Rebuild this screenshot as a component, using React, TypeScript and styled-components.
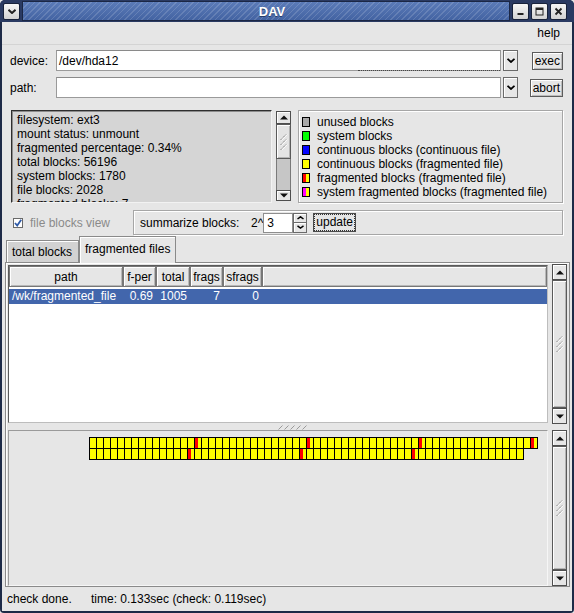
import React from "react";
import styled, { createGlobalStyle } from "styled-components";

const GlobalStyle = createGlobalStyle`
  * { box-sizing: border-box; }
  html, body { margin: 0; padding: 0; }
  body {
    width: 574px;
    height: 613px;
    overflow: hidden;
    background: #e6e6e6;
    font-family: "Liberation Sans", Arial, Helvetica, sans-serif;
    font-size: 12px;
    color: #000;
  }
`;

const Window = styled.div`
  width: 574px;
  height: 613px;
  display: flex;
  flex-direction: column;
  background: #1d2a47;
  border-radius: 5px 5px 4px 4px;
  overflow: hidden;
`;

const TitleBar = styled.div`
  height: 22px;
  flex: none;
  display: flex;
  align-items: center;
  padding: 0 7px 0 3px;
  background: #2a3a62;
`;

const TitleButton = styled.div<{ $gapLeft?: number }>`
  width: 17px;
  height: 17px;
  flex: none;
  margin-left: ${(p) => p.$gapLeft ?? 0}px;
  border: 1px solid #18223a;
  border-radius: 2px;
  background: linear-gradient(#f6f6f6, #d2d2d2);
  display: flex;
  align-items: center;
  justify-content: center;
`;

const TitleCaption = styled.div`
  flex: 1;
  align-self: stretch;
  margin: 1px 2px;
  padding-left: 12px;
  display: flex;
  align-items: center;
  justify-content: center;
  color: #fff;
  font-weight: bold;
  font-size: 13px;
  text-shadow: 0 1px 0 #253a66;
  border: 1px solid #1b2745;
  background:
    repeating-linear-gradient(135deg, rgba(255, 255, 255, 0.14) 0 1px, transparent 1px 4px),
    linear-gradient(#5b7bb8, #4363a2);
`;

const WindowBody = styled.div`
  flex: 1;
  min-height: 0;
  display: flex;
  padding: 0 2px 2px 2px;
`;

const Client = styled.div`
  flex: 1;
  min-width: 0;
  display: flex;
  flex-direction: column;
  background: #e6e6e6;
`;

const MenuBar = styled.div`
  height: 23px;
  flex: none;
  display: flex;
  justify-content: flex-end;
  align-items: center;
  padding-right: 11px;
  border-bottom: 1px solid #d4d4d4;
`;

const MenuItem = styled.span`
  padding: 0 1px;
`;

const FormGrid = styled.div`
  flex: none;
  display: grid;
  grid-template-columns: 46px 462px 46px;
  grid-auto-rows: 21px;
  row-gap: 6px;
  padding: 5px 8px 0 8px;
  align-items: center;
`;

const FieldLabel = styled.span`
  white-space: nowrap;
`;

const Combo = styled.div`
  height: 21px;
  display: flex;
  gap: 2px;
`;

const ComboEntry = styled.div<{ $focusLine?: boolean }>`
  flex: 1;
  position: relative;
  display: flex;
  align-items: center;
  padding-left: 2px;
  background: #fff;
  border: 1px solid #9a9a9a;
  border-top-color: #8a8a8a;
  &::after {
    content: "";
    display: ${(p) => (p.$focusLine ? "block" : "none")};
    position: absolute;
    left: 301px;
    right: 0;
    bottom: -1px;
    border-bottom: 1px dotted #444;
  }
`;

const ComboArrow = styled.div`
  width: 15px;
  flex: none;
  display: flex;
  align-items: center;
  justify-content: center;
  background: #e6e6e6;
  border: 1px solid #6a6a6a;
  box-shadow: inset 1px 1px 0 #fff;
`;

const PushButton = styled.button`
  justify-self: end;
  margin-right: 1px;
  height: 18px;
  padding: 0 2px;
  font: inherit;
  color: #000;
  background: #e6e6e6;
  border: 1px solid #5c5c5c;
  box-shadow: inset 1px 1px 0 #fff, inset -1px -1px 0 #bcbcbc;
  border-radius: 0;
  line-height: 14px;
`;

const InfoRow = styled.div`
  flex: none;
  height: 93px;
  margin-top: 12px;
  padding: 0 9px;
  display: flex;
`;

const InfoBox = styled.div`
  width: 261px;
  flex: none;
  overflow: hidden;
  white-space: nowrap;
  line-height: 14px;
  padding: 2px 0 0 5px;
  background: #d5d5d5;
  border: 1px solid;
  border-color: #2e2e2e #f2f2f2 #f2f2f2 #2e2e2e;
  box-shadow: inset 1px 1px 0 #8c8c8c;
`;

const InfoLine = styled.div``;

const VScroll = styled.div<{ $margin?: string }>`
  width: 15px;
  flex: none;
  margin: ${(p) => p.$margin ?? "0"};
  display: flex;
  flex-direction: column;
  background: #c6c6c6;
  border: 1px solid #7a7a7a;
`;

const ScrollBtn = styled.div<{ $h: number }>`
  height: ${(p) => p.$h}px;
  flex: none;
  display: flex;
  align-items: center;
  justify-content: center;
  background: #e6e6e6;
  border: 1px solid #4e4e4e;
  margin: -1px;
  box-shadow: inset 1px 1px 0 #fff;
`;

const Trough = styled.div`
  flex: 1;
  min-height: 0;
  display: flex;
  flex-direction: column;
  padding: 1px 0;
`;

const Thumb = styled.div<{ $h?: number }>`
  ${(p) => (p.$h ? `height: ${p.$h}px; flex: none;` : "flex: 1;")}
  margin: 0 -1px;
  display: flex;
  align-items: center;
  justify-content: center;
  background: #e4e4e4;
  border: 1px solid #5a5a5a;
  box-shadow: inset 1px 1px 0 #fff, inset -1px -1px 0 #b4b4b4;
`;

const Legend = styled.div`
  flex: 1;
  margin-left: 7px;
  padding: 4px 0 0 3px;
  border: 1px solid #a6a6a6;
  box-shadow: inset 1px 1px 0 #fff, 1px 1px 0 #fff;
`;

const LegendRow = styled.div`
  height: 14px;
  display: flex;
  align-items: center;
  white-space: nowrap;
`;

const Swatch = styled.span<{ $fill: string }>`
  width: 8px;
  height: 10px;
  flex: none;
  margin-right: 7px;
  border: 1px solid #000;
  background: ${(p) => p.$fill};
`;

const OptionsRow = styled.div`
  flex: none;
  height: 25px;
  margin-top: 7px;
  padding: 0 9px 0 11px;
  display: flex;
`;

const CheckArea = styled.label`
  width: 120px;
  flex: none;
  display: flex;
  align-items: center;
  gap: 7px;
  color: #8a8a8a;
`;

const CheckBox = styled.span`
  width: 10px;
  height: 10px;
  flex: none;
  display: flex;
  align-items: center;
  justify-content: center;
  background: #fff;
  border: 1px solid #6a6a6a;
`;

const SummFrame = styled.div`
  flex: 1;
  display: flex;
  align-items: center;
  padding-left: 6px;
  border: 1px solid #a6a6a6;
  box-shadow: inset 1px 1px 0 #fff, 1px 1px 0 #fff;
`;

const SummLabel = styled.span`
  width: 111px;
  flex: none;
`;

const SpinEntry = styled.div`
  width: 30px;
  height: 20px;
  flex: none;
  display: flex;
  align-items: center;
  padding-left: 3px;
  background: #fff;
  border: 1px solid #8e8e8e;
`;

const SpinButtons = styled.div`
  width: 14px;
  height: 20px;
  flex: none;
  display: flex;
  flex-direction: column;
`;

const SpinHalf = styled.div`
  flex: 1;
  display: flex;
  align-items: center;
  justify-content: center;
  background: #e6e6e6;
  border: 1px solid #6a6a6a;
  box-shadow: inset 1px 1px 0 #fff;
  & + & {
    border-top: none;
  }
`;

const UpdateButton = styled.button`
  height: 19px;
  margin-left: 6px;
  padding: 0 2px;
  font: inherit;
  color: #000;
  background: #e6e6e6;
  border: 1px solid #4a4a4a;
  border-radius: 0;
  outline: 1px dotted #333;
  outline-offset: -2px;
  line-height: 15px;
`;

const TabRow = styled.div`
  flex: none;
  height: 26px;
  margin-top: 1px;
  padding-left: 4px;
  display: flex;
  align-items: flex-end;
  position: relative;
  z-index: 1;
`;

const Tab = styled.div<{ $active?: boolean; $w: number }>`
  width: ${(p) => p.$w}px;
  height: ${(p) => (p.$active ? 27 : 22)}px;
  margin-bottom: ${(p) => (p.$active ? -1 : 0)}px;
  padding: ${(p) => (p.$active ? "0 0 2px 5px" : "0 0 0 5px")};
  display: flex;
  align-items: center;
  white-space: nowrap;
  background: ${(p) => (p.$active ? "#e6e6e6" : "#d2d2d2")};
  border: 1px solid #8a8a8a;
  border-bottom: none;
  box-shadow: inset 1px 1px 0 #fff;
`;

const TabPanel = styled.div`
  flex: none;
  height: 325px;
  margin: 0 2px 0 3px;
  padding: 1px 2px 0 2px;
  display: flex;
  flex-direction: column;
  border: 1px solid #8a8a8a;
  box-shadow: inset 1px 1px 0 #fff;
`;

const Pane = styled.div<{ $h: number }>`
  height: ${(p) => p.$h}px;
  flex: none;
  display: flex;
  gap: 4px;
`;

const TableFrame = styled.div`
  flex: 1;
  min-width: 0;
  margin: 1px 0 1px 0;
  display: flex;
  flex-direction: column;
  background: #fff;
  border: 1px solid;
  border-color: #5a5a5a #bdbdbd #bdbdbd #5a5a5a;
`;

const HeaderRow = styled.div`
  height: 21px;
  flex: none;
  display: flex;
`;

const HeaderCell = styled.div<{ $w?: number }>`
  ${(p) => (p.$w ? `width: ${p.$w}px; flex: none;` : "flex: 1;")}
  display: flex;
  align-items: center;
  justify-content: center;
  background: #e6e6e6;
  border: 1px solid #777;
  box-shadow: inset 1px 1px 0 #fff, inset -1px -1px 0 #b8b8b8;
`;

const DataRow = styled.div<{ $selected?: boolean }>`
  height: 15px;
  margin-top: 2px;
  display: flex;
  line-height: 15px;
  white-space: nowrap;
  background: ${(p) => (p.$selected ? "#4266ac" : "transparent")};
  color: ${(p) => (p.$selected ? "#fff" : "#000")};
`;

const DataCell = styled.div<{ $w: number; $right?: boolean }>`
  width: ${(p) => p.$w}px;
  flex: none;
  padding: 0 3px;
  text-align: ${(p) => (p.$right ? "right" : "left")};
`;

const PaneHandle = styled.div`
  height: 6px;
  flex: none;
  display: flex;
  align-items: center;
  justify-content: center;
  padding-left: 10px;
`;

const CanvasFrame = styled.div`
  flex: 1;
  min-width: 0;
  padding: 6px 0 0 80px;
  background: #e6e6e6;
  border: 1px solid;
  border-color: #9a9a9a #f6f6f6 #f6f6f6 #9a9a9a;
`;

const StatusBar = styled.div`
  flex: 1;
  display: flex;
  align-items: center;
  padding-left: 5px;
  white-space: nowrap;
`;

const StatusCell = styled.span<{ $w?: number }>`
  ${(p) => (p.$w ? `width: ${p.$w}px; flex: none;` : "")}
`;

/* ---------- drawings ---------- */

const Chevron = ({ up = false, color = "#000", w = 7, h = 4, sw = 1.8 }) => (
  <svg width={w + 1} height={h + 1} viewBox={`0 0 ${w + 1} ${h + 1}`}>
    <path
      d={up ? `M0.5 ${h} L${(w + 1) / 2} 0.8 L${w + 0.5} ${h}` : `M0.5 0.8 L${(w + 1) / 2} ${h} L${w + 0.5} 0.8`}
      fill="none"
      stroke={color}
      strokeWidth={sw}
    />
  </svg>
);

const Tri = ({ up = false }) => (
  <svg width="8" height="5" viewBox="0 0 8 5">
    <path d={up ? "M0 4.5 L4 0.5 L8 4.5 Z" : "M0 0.5 L8 0.5 L4 4.5 Z"} fill="#111" />
  </svg>
);

const Grip = () => (
  <svg width="8" height="16" viewBox="0 0 8 16">
    {[0, 5, 10].map((o) => (
      <g key={o}>
        <line x1="0.5" y1={6 + o} x2="6.5" y2={o} stroke="#8a8a8a" strokeWidth="1" strokeDasharray="1.5 0.6" />
        <line x1="1.5" y1={6.5 + o} x2="7.5" y2={0.5 + o} stroke="#fff" strokeWidth="0.8" />
      </g>
    ))}
  </svg>
);

const PaneGrip = () => (
  <svg width="30" height="5" viewBox="0 0 30 5">
    {[0, 1, 2, 3, 4].map((i) => (
      <line key={i} x1={i * 6 + 0.5} y1="4.5" x2={i * 6 + 4.5} y2="0.5" stroke="#9a9a9a" strokeWidth="1" />
    ))}
  </svg>
);

const CheckMark = () => (
  <svg width="8" height="8" viewBox="0 0 8 8">
    <path d="M1 4 L3.2 6.5 L7.2 0.8" fill="none" stroke="#2f5aa8" strokeWidth="1.8" />
  </svg>
);

const MinIcon = () => (
  <svg width="9" height="9" viewBox="0 0 9 9">
    <rect x="1.5" y="6" width="6" height="2" fill="#222" />
  </svg>
);

const MaxIcon = () => (
  <svg width="9" height="9" viewBox="0 0 9 9">
    <rect x="1" y="1" width="7" height="7" fill="none" stroke="#222" strokeWidth="1" />
    <rect x="1" y="1" width="7" height="2" fill="#222" />
  </svg>
);

const CloseIcon = () => (
  <svg width="9" height="9" viewBox="0 0 9 9">
    <path d="M1.5 1.5 L7.5 7.5 M7.5 1.5 L1.5 7.5" stroke="#222" strokeWidth="1.8" />
  </svg>
);

const blockRows = [
  { count: 64, reds: [15, 31, 47, 63] },
  { count: 62, reds: [14, 30, 46] },
];

const BlockMap = () => (
  <svg width={449} height={23} viewBox="0 0 449 23" shapeRendering="crispEdges">
    {blockRows.map((r, ri) =>
      Array.from({ length: r.count }, (_, i) => (
        <g key={`${ri}-${i}`}>
          <rect x={i * 7 + 0.5} y={ri * 11 + 0.5} width={7} height={11} fill="#ffff00" stroke="#000" strokeWidth="1" />
          {r.reds.includes(i) && <rect x={i * 7 + 1} y={ri * 11 + 1} width={3} height={10} fill="#ff0000" />}
        </g>
      ))
    )}
  </svg>
);

/* ---------- data ---------- */

const infoLines = [
  "filesystem: ext3",
  "mount status: unmount",
  "fragmented percentage: 0.34%",
  "total blocks: 56196",
  "system blocks: 1780",
  "file blocks: 2028",
  "fragmented blocks: 7",
];

const legendItems = [
  { fill: "#a8a8a8", label: "unused blocks" },
  { fill: "#00ff00", label: "system blocks" },
  { fill: "#0000ff", label: "continuous blocks (continuous file)" },
  { fill: "#ffff00", label: "continuous blocks (fragmented file)" },
  { fill: "linear-gradient(90deg, #ff0000 50%, #ffff00 50%)", label: "fragmented blocks (fragmented file)" },
  { fill: "linear-gradient(90deg, #ff00ff 50%, #ffff00 50%)", label: "system fragmented blocks (fragmented file)" },
];

const columns = [
  { title: "path", w: 114 },
  { title: "f-per", w: 33 },
  { title: "total", w: 34 },
  { title: "frags", w: 33 },
  { title: "sfrags", w: 39 },
];

const rowData = ["/wk/fragmented_file", "0.69", "1005", "7", "0"];

export default function App() {
  return (
    <>
      <GlobalStyle />
      <Window>
        <TitleBar>
          <TitleButton>
            <Chevron color="#222" w={7} h={4} sw={2} />
          </TitleButton>
          <TitleCaption>DAV</TitleCaption>
          <TitleButton>
            <MinIcon />
          </TitleButton>
          <TitleButton $gapLeft={2}>
            <MaxIcon />
          </TitleButton>
          <TitleButton $gapLeft={2}>
            <CloseIcon />
          </TitleButton>
        </TitleBar>
        <WindowBody>
          <Client>
            <MenuBar>
              <MenuItem>help</MenuItem>
            </MenuBar>

            <FormGrid>
              <FieldLabel>device:</FieldLabel>
              <Combo>
                <ComboEntry $focusLine>/dev/hda12</ComboEntry>
                <ComboArrow>
                  <Chevron />
                </ComboArrow>
              </Combo>
              <PushButton>exec</PushButton>

              <FieldLabel>path:</FieldLabel>
              <Combo>
                <ComboEntry />
                <ComboArrow>
                  <Chevron />
                </ComboArrow>
              </Combo>
              <PushButton>abort</PushButton>
            </FormGrid>

            <InfoRow>
              <InfoBox>
                {infoLines.map((l) => (
                  <InfoLine key={l}>{l}</InfoLine>
                ))}
              </InfoBox>
              <VScroll $margin="1px 0 2px 4px">
                <ScrollBtn $h={13}>
                  <Tri up />
                </ScrollBtn>
                <Trough>
                  <Thumb $h={35}>
                    <Grip />
                  </Thumb>
                </Trough>
                <ScrollBtn $h={11}>
                  <Tri />
                </ScrollBtn>
              </VScroll>
              <Legend>
                {legendItems.map((it) => (
                  <LegendRow key={it.label}>
                    <Swatch $fill={it.fill} />
                    {it.label}
                  </LegendRow>
                ))}
              </Legend>
            </InfoRow>

            <OptionsRow>
              <CheckArea>
                <CheckBox>
                  <CheckMark />
                </CheckBox>
                file blocks view
              </CheckArea>
              <SummFrame>
                <SummLabel>summarize blocks:</SummLabel>
                <span>2^</span>
                <SpinEntry>3</SpinEntry>
                <SpinButtons>
                  <SpinHalf>
                    <Chevron up w={6} h={3} sw={1.5} />
                  </SpinHalf>
                  <SpinHalf>
                    <Chevron w={6} h={3} sw={1.5} />
                  </SpinHalf>
                </SpinButtons>
                <UpdateButton>update</UpdateButton>
              </SummFrame>
            </OptionsRow>

            <TabRow>
              <Tab $w={73}>total blocks</Tab>
              <Tab $w={97} $active>
                fragmented files
              </Tab>
            </TabRow>

            <TabPanel>
              <Pane $h={160}>
                <TableFrame>
                  <HeaderRow>
                    {columns.map((c) => (
                      <HeaderCell key={c.title} $w={c.w}>
                        {c.title}
                      </HeaderCell>
                    ))}
                    <HeaderCell />
                  </HeaderRow>
                  <DataRow $selected>
                    {columns.map((c, i) => (
                      <DataCell key={c.title} $w={c.w} $right={i > 0}>
                        {rowData[i]}
                      </DataCell>
                    ))}
                  </DataRow>
                </TableFrame>
                <VScroll>
                  <ScrollBtn $h={16}>
                    <Tri up />
                  </ScrollBtn>
                  <Trough>
                    <Thumb>
                      <Grip />
                    </Thumb>
                  </Trough>
                  <ScrollBtn $h={16}>
                    <Tri />
                  </ScrollBtn>
                </VScroll>
              </Pane>

              <PaneHandle>
                <PaneGrip />
              </PaneHandle>

              <Pane $h={156}>
                <CanvasFrame>
                  <BlockMap />
                </CanvasFrame>
                <VScroll>
                  <ScrollBtn $h={16}>
                    <Tri up />
                  </ScrollBtn>
                  <Trough>
                    <Thumb>
                      <Grip />
                    </Thumb>
                  </Trough>
                  <ScrollBtn $h={16}>
                    <Tri />
                  </ScrollBtn>
                </VScroll>
              </Pane>
            </TabPanel>

            <StatusBar>
              <StatusCell $w={84}>check done.</StatusCell>
              <StatusCell>time: 0.133sec (check: 0.119sec)</StatusCell>
            </StatusBar>
          </Client>
        </WindowBody>
      </Window>
    </>
  );
}
